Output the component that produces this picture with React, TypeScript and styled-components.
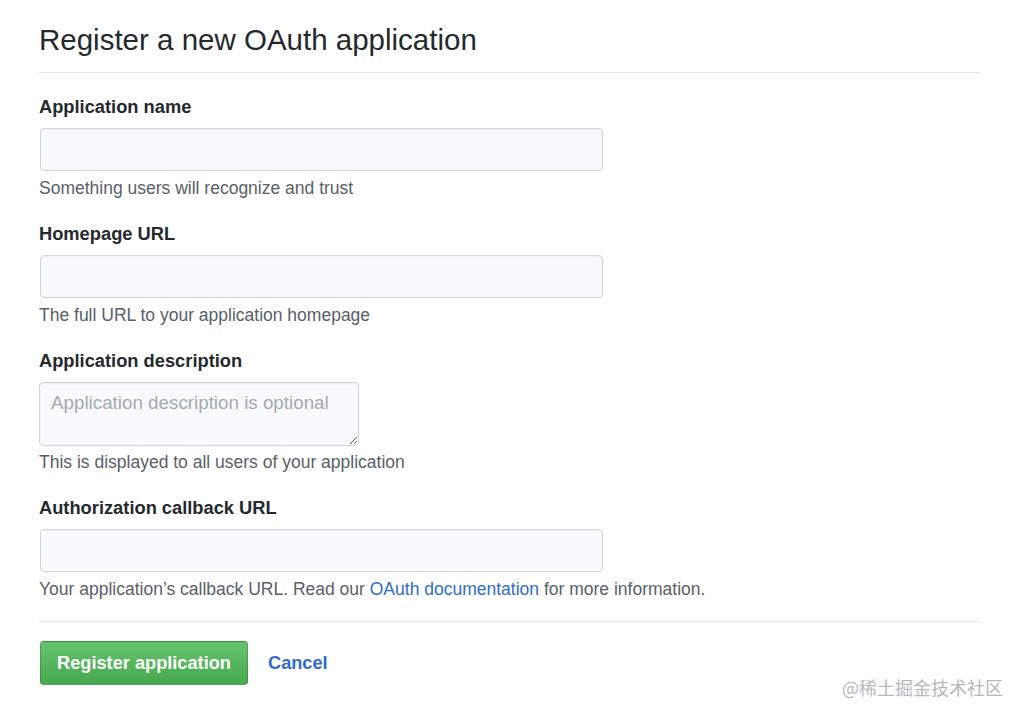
import React from "react";
import styled, { createGlobalStyle } from "styled-components";

const Global = createGlobalStyle`
  html, body { margin: 0; padding: 0; background: #fff; }
  body { font-family: "Liberation Sans", Arial, sans-serif; color: #24292e; }
  * { box-sizing: border-box; }
`;

const Page = styled.div`
  position: relative;
  width: 1024px;
  height: 717px;
  padding: 20px 44px 0 39px;
`;

const Title = styled.h2`
  margin: 0;
  font-size: 29.5px;
  font-weight: 400;
  line-height: 40px;
  color: #24292e;
  padding-bottom: 12px;
  border-bottom: 1px solid #e1e4e8;
`;

const Form = styled.form`
  display: flex;
  flex-direction: column;
  padding-top: 23px;
`;

const Group = styled.div<{ $after?: number }>`
  display: flex;
  flex-direction: column;
  margin-bottom: ${(p) => p.$after ?? 25}px;
`;

const Label = styled.label`
  font-size: 18.3px;
  font-weight: 700;
  line-height: 22px;
  height: 22px;
  color: #24292e;
  margin-bottom: 10px;
`;

const Input = styled.input`
  display: block;
  width: 563px;
  height: 43px;
  margin: 0 0 0 1px;
  border: 1px solid #d1d5da;
  border-radius: 4px;
  background: #f9fafb;
  box-shadow: inset 0 1px 2px rgba(27, 31, 35, 0.06);
  font: inherit;
  font-size: 17px;
  padding: 8px 11px;
  outline: none;
`;

const TextArea = styled.textarea`
  display: block;
  width: 320px;
  height: 64px;
  margin: 0;
  border: 1px solid #d1d5da;
  border-radius: 4px;
  background: #f9fafb;
  box-shadow: inset 0 1px 2px rgba(27, 31, 35, 0.06);
  font-family: "Liberation Sans", Arial, sans-serif;
  font-size: 18.8px;
  line-height: 22px;
  padding: 9px 11px;
  resize: both;
  outline: none;
  &::placeholder { color: #a3aab1; }
`;

const Note = styled.p<{ $top?: number }>`
  margin: ${(p) => p.$top ?? 7}px 0 0;
  font-size: 17.5px;
  line-height: 20px;
  height: 20px;
  white-space: nowrap;
  color: #586069;
`;

const Link = styled.a`
  color: #2f6bd1;
  text-decoration: none;
`;

const Divider = styled.hr`
  margin: 0 0 19px;
  border: 0;
  border-top: 1px solid #e1e4e8;
`;

const Actions = styled.div`
  display: flex;
  align-items: center;
  gap: 20px;
  padding-left: 1px;
`;

const Primary = styled.button`
  height: 44px;
  width: 208px;
  border: 1px solid rgba(27, 31, 35, 0.2);
  border-radius: 4px;
  background: linear-gradient(180deg, #66c46f 0%, #45a84e 100%);
  color: #fff;
  font-family: "Liberation Sans", Arial, sans-serif;
  font-size: 18.2px;
  font-weight: 700;
  padding: 0;
  cursor: pointer;
`;

const Cancel = styled.a`
  font-size: 18.2px;
  font-weight: 700;
  color: #2f6bd1;
  text-decoration: none;
`;

const Watermark = styled.div`
  position: absolute;
  right: 21px;
  bottom: 17px;
  font-family: "Noto Sans CJK SC", sans-serif;
  font-size: 18px;
  line-height: 26px;
  color: #b6b8bb;
`;

export default function App() {
  return (
    <Page>
      <Global />
      <Title>Register a new OAuth application</Title>
      <Form onSubmit={(e) => e.preventDefault()}>
        <Group>
          <Label>Application name</Label>
          <Input type="text" />
          <Note>Something users will recognize and trust</Note>
        </Group>
        <Group>
          <Label>Homepage URL</Label>
          <Input type="text" />
          <Note>The full URL to your application homepage</Note>
        </Group>
        <Group>
          <Label>Application description</Label>
          <TextArea placeholder="Application description is optional" />
          <Note $top={6}>This is displayed to all users of your application</Note>
        </Group>
        <Group $after={22}>
          <Label>Authorization callback URL</Label>
          <Input type="text" />
          <Note>
            Your application’s callback URL. Read our <Link href="#">OAuth documentation</Link> for more information.
          </Note>
        </Group>
        <Divider />
        <Actions>
          <Primary type="submit">Register application</Primary>
          <Cancel href="#">Cancel</Cancel>
        </Actions>
      </Form>
      <Watermark>@稀土掘金技术社区</Watermark>
    </Page>
  );
}
